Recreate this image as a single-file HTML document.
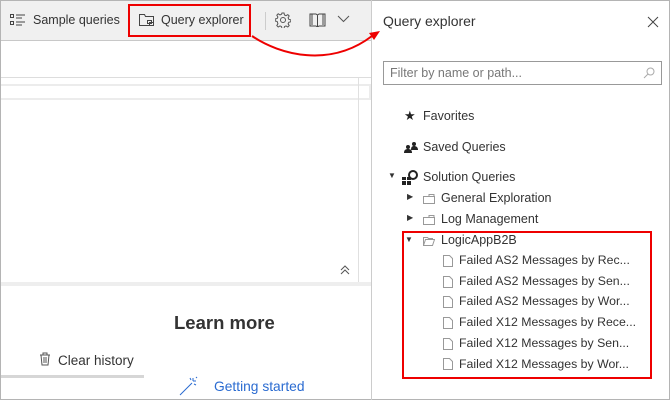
<!DOCTYPE html>
<html><head><style>
*{margin:0;padding:0;box-sizing:border-box}
body{width:670px;height:400px;overflow:hidden;background:#fff;font-family:"Liberation Sans",sans-serif;font-size:12.5px;color:#333;position:relative}
.a{position:absolute;white-space:nowrap}
</style></head><body>
<div class="a" style="left:0;top:0;width:372px;height:41px;background:#f0f0f0;border-bottom:1px solid #c8c8c8"></div>
<div class="a" style="left:0;top:0;width:670px;height:400px;border:1px solid #b4b4b4"></div>
<!-- toolbar -->
<svg class="a" style="left:10px;top:13px" width="16" height="14" viewBox="0 0 16 14" fill="none" stroke="#444"><rect x="0.5" y="1.5" width="3" height="3"/><rect x="0.5" y="8.5" width="3" height="3"/><path d="M6 2h9M6 5h6M6 9h9M6 12h6"/></svg>
<div class="a" style="left:33px;top:13px">Sample queries</div>
<div class="a" style="left:128px;top:4px;width:123px;height:33px;border:2px solid #e00"></div>
<svg class="a" style="left:139px;top:13px" width="16" height="14" viewBox="0 0 16 14" fill="none" stroke="#444"><path d="M0.5 1.5h5l1 2h8v9h-14z"/><rect x="8.5" y="7.5" width="4" height="3"/><rect x="10.5" y="9.5" width="4" height="3"/></svg>
<div class="a" style="left:161px;top:13px">Query explorer</div>
<div class="a" style="left:265px;top:12px;width:1px;height:18px;background:#ccc"></div>
<svg class="a" style="left:275px;top:12px" width="16" height="16" viewBox="0 0 16 16" fill="none" stroke="#555"><circle cx="8" cy="8" r="2.5"/><path d="M7 1h2l.5 2 1.5.7 1.8-1.1 1.4 1.4-1.1 1.8.7 1.5 2 .5v2l-2 .5-.7 1.5 1.1 1.8-1.4 1.4-1.8-1.1-1.5.7-.5 2H7l-.5-2-1.5-.7-1.8 1.1-1.4-1.4 1.1-1.8L2.2 9.5.2 9V7l2-.5.7-1.5-1.1-1.8 1.4-1.4 1.8 1.1 1.5-.7z"/></svg>
<svg class="a" style="left:309px;top:12px" width="17" height="15" viewBox="0 0 17 15" fill="none" stroke="#444"><path d="M1 2h6l1.5 1 1.5-1h6v12h-6l-1.5 1-1.5-1h-6zM8.5 3v12M3 2v11M14 2v11"/></svg>
<svg class="a" style="left:337px;top:15px" width="13" height="8" viewBox="0 0 13 8" fill="none" stroke="#555"><path d="M1 1l5.5 5.5L12 1"/></svg>
<!-- left panel -->
<div class="a" style="left:1px;top:77px;width:371px;height:1px;background:#ddd"></div>
<div class="a" style="left:1px;top:84px;width:370px;height:16px;border:2px solid #ececec;border-left:0"></div>
<div class="a" style="left:358px;top:78px;width:1px;height:204px;background:#e0e0e0"></div>
<svg class="a" style="left:339px;top:264px" width="12" height="12" viewBox="0 0 12 12" fill="none" stroke="#555"><path d="M2 6l4-4 4 4M2 10l4-4 4 4"/></svg>
<div class="a" style="left:1px;top:282px;width:371px;height:4px;background:#eee"></div>
<div class="a" style="left:371px;top:0;width:1px;height:400px;background:#ccc"></div>
<div class="a" style="left:174px;top:312px;font-size:18.5px;font-weight:bold;color:#333">Learn more</div>
<svg class="a" style="left:39px;top:352px" width="12" height="14" viewBox="0 0 12 14" fill="none" stroke="#555"><path d="M1 3h10M4 3V1h4v2M2 3l1 10h6l1-10M5 5v6M7 5v6"/></svg>
<div class="a" style="left:58px;top:353px;font-size:13.5px">Clear history</div>
<div class="a" style="left:1px;top:375px;width:143px;height:3px;background:#d6d6d6"></div>
<svg class="a" style="left:179px;top:376px" width="20" height="20" viewBox="0 0 20 20" fill="none" stroke="#2a6bd1"><path d="M1 19L13 7M14 2v3M17 5h-3M15 8l2 1M12 4l-1-2M17 2l1-1"/></svg>
<div class="a" style="left:214px;top:379px;font-size:13.8px;color:#2a6bd1">Getting started</div>
<!-- arrow -->
<svg class="a" style="left:0;top:0" width="400" height="80"><path d="M252 36 C280 55, 330 68, 372 36" fill="none" stroke="#e00" stroke-width="2"/><path d="M380 31l-11 2 5 7z" fill="#e00"/></svg>
<!-- right pane -->
<div class="a" style="left:383px;top:13px;font-size:14px;color:#333">Query explorer</div>
<svg class="a" style="left:647px;top:16px" width="12" height="12" viewBox="0 0 12 12" stroke="#444"><path d="M1 1l10 10M11 1L1 11"/></svg>
<div class="a" style="left:383px;top:61px;width:279px;height:24px;border:1px solid #999"></div>
<div class="a" style="left:390px;top:66px;color:#777;font-size:12.5px">Filter by name or path...</div>
<svg class="a" style="left:643px;top:67px" width="12" height="12" viewBox="0 0 12 12" fill="none" stroke="#aaa"><circle cx="7.5" cy="4.5" r="3.5"/><path d="M5 7l-4 4"/></svg>
<div class="a" style="left:404px;top:108px;font-size:13px;color:#222">★</div>
<div class="a" style="left:423px;top:109px">Favorites</div>
<svg class="a" style="left:404px;top:141px" width="14" height="12" viewBox="0 0 14 12" fill="#222"><circle cx="4" cy="6" r="2"/><path d="M0 12c0-3 1.5-4 4-4s4 1 4 4z"/><circle cx="10" cy="3" r="2"/><path d="M7 9c0-3 1-4 3-4s4 1 4 4z"/></svg>
<div class="a" style="left:423px;top:140px">Saved Queries</div>
<div class="a" style="left:388px;top:171px;font-size:8px">▼</div>
<svg class="a" style="left:402px;top:170px" width="16" height="15" viewBox="0 0 16 15"><rect x="0" y="7" width="4" height="3" fill="#222"/><rect x="5" y="7" width="4" height="3" fill="#222"/><rect x="0" y="11" width="4" height="4" fill="#222"/><rect x="5" y="11" width="4" height="4" fill="#222"/><circle cx="11" cy="5" r="4" fill="none" stroke="#222" stroke-width="2"/></svg>
<div class="a" style="left:423px;top:170px">Solution Queries</div>
<div class="a" style="left:407px;top:192px;font-size:8px">▶</div>
<div class="a" style="left:407px;top:213px;font-size:8px">▶</div>
<div class="a" style="left:405px;top:235px;font-size:8px">▼</div>
<svg class="a" style="left:423px;top:194px" width="12" height="10" viewBox="0 0 12 10" fill="none" stroke="#999"><path d="M.5 2.5h11v7H.5zM6 2.5V.5h5v2"/></svg>
<svg class="a" style="left:423px;top:215px" width="12" height="10" viewBox="0 0 12 10" fill="none" stroke="#999"><path d="M.5 2.5h11v7H.5zM6 2.5V.5h5v2"/></svg>
<svg class="a" style="left:423px;top:236px" width="12" height="10" viewBox="0 0 12 10" fill="none" stroke="#999"><path d="M.5 9.5l2-6h9l-2 6zM.5 9.5v-8h4l1 1h4v1"/></svg>
<div class="a" style="left:441px;top:191px">General Exploration</div>
<div class="a" style="left:441px;top:212px">Log Management</div>
<div class="a" style="left:441px;top:233px">LogicAppB2B</div>
<div class="a" style="left:402px;top:231px;width:250px;height:148px;border:2px solid #e00"></div>
<div class="a" style="left:443px;top:252px;line-height:20.7px">
<svg width="10" height="12" viewBox="0 0 10 12" fill="none" stroke="#999" style="display:block;margin-top:3px"><path d="M.5.5h6l3 3v8h-9z"/></svg>
<svg width="10" height="12" viewBox="0 0 10 12" fill="none" stroke="#999" style="display:block;margin-top:8.7px"><path d="M.5.5h6l3 3v8h-9z"/></svg>
<svg width="10" height="12" viewBox="0 0 10 12" fill="none" stroke="#999" style="display:block;margin-top:8.7px"><path d="M.5.5h6l3 3v8h-9z"/></svg>
<svg width="10" height="12" viewBox="0 0 10 12" fill="none" stroke="#999" style="display:block;margin-top:8.7px"><path d="M.5.5h6l3 3v8h-9z"/></svg>
<svg width="10" height="12" viewBox="0 0 10 12" fill="none" stroke="#999" style="display:block;margin-top:8.7px"><path d="M.5.5h6l3 3v8h-9z"/></svg>
<svg width="10" height="12" viewBox="0 0 10 12" fill="none" stroke="#999" style="display:block;margin-top:8.7px"><path d="M.5.5h6l3 3v8h-9z"/></svg>
</div>
<div class="a" style="left:459px;top:250px;line-height:20.7px;font-size:12.3px">Failed AS2 Messages by Rec...<br>Failed AS2 Messages by Sen...<br>Failed AS2 Messages by Wor...<br>Failed X12 Messages by Rece...<br>Failed X12 Messages by Sen...<br>Failed X12 Messages by Wor...</div>
</body></html>
